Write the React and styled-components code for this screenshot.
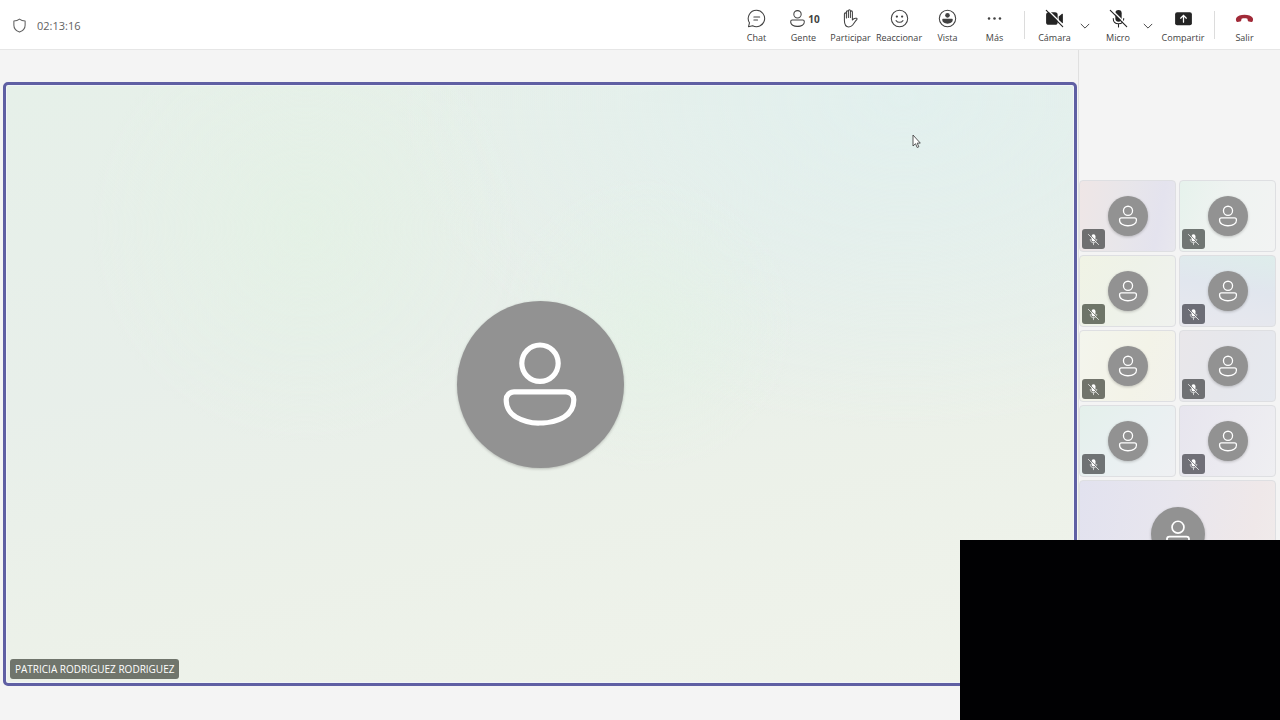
import styled, { createGlobalStyle } from "styled-components";

const GlobalStyle = createGlobalStyle`
  * {
    box-sizing: border-box;
  }

  body {
    margin: 0;
    background-color: #f4f4f4;
    color: #424242;
    font-family: "Open Sans", "Noto Sans", sans-serif;
  }

  button {
    font-family: inherit;
    color: inherit;
  }
`;

const StyledMeeting = styled.div`
  min-height: 100vh;
  display: flex;
  flex-direction: column;
`;

const StyledHeader = styled.header`
  height: 50px;
  padding: 0 12px;
  background-color: #ffffff;
  border-bottom: 1px solid #e6e6e6;
  display: flex;
  align-items: center;
  justify-content: space-between;
`;

const StyledStatus = styled.div`
  padding-top: 2px;
  display: flex;
  align-items: center;
  gap: 10px;
  font-size: 11px;
  color: #616161;
`;

const StyledToolbar = styled.nav`
  display: flex;
  align-items: center;
`;

const StyledToolButton = styled.button`
  width: ${(props) => props.$width || 47}px;
  height: 41px;
  padding: 4px 0 0;
  border: none;
  background: none;
  display: flex;
  flex-direction: column;
  align-items: center;
  gap: 2px;
  font-size: 9px;
  line-height: 14px;
  cursor: pointer;
`;

const StyledToolIcon = styled.span`
  height: 21px;
  display: flex;
  align-items: center;
  color: ${(props) => props.$color || "#424242"};
`;

const StyledCount = styled.span`
  font-size: 10px;
  font-weight: 700;
`;

const StyledChevronButton = styled.button`
  width: 14px;
  height: 40px;
  margin-right: 3px;
  padding: 2px 0 0;
  border: none;
  background: none;
  display: flex;
  align-items: center;
  justify-content: center;
  cursor: pointer;
`;

const StyledDivider = styled.span`
  width: 1px;
  height: 28px;
  margin: 0 6px;
  background-color: #dcdcdc;
`;

const StyledStage = styled.main`
  flex: 1;
  padding-bottom: 2px;
  display: flex;
`;

const StyledSpeakerArea = styled.section`
  flex: 1;
  padding: 0 1px 0 3px;
  display: flex;
  align-items: center;
`;

const StyledSpeaker = styled.article`
  width: 100%;
  aspect-ratio: 16 / 9;
  border: 3px solid #5f5fa3;
  border-radius: 5px;
  padding: 4px;
  display: grid;
  box-shadow: inset 0 0 0 1px #f1f5f8;
  background:
    radial-gradient(circle at 28% 24%, #e3f2e4b0 0%, #e3f2e400 24%),
    radial-gradient(circle at 60% 40%, #e3f2e5b0 0%, #e3f2e500 20%),
    radial-gradient(ellipse at 84% 2%, #e2f0ee 0%, #e2f0ee00 40%),
    linear-gradient(168deg, #e6f0e9 0%, #e8efea 40%, #ecf1e9 68%, #f0f3eb 100%);
`;

const StyledAvatar = styled.span`
  width: ${(props) => props.$size}px;
  height: ${(props) => props.$size}px;
  grid-area: 1 / 1;
  place-self: center;
  border-radius: 50%;
  background-color: #929292;
  color: #ffffff;
  box-shadow: 0 1px 3px #00000038;
  display: flex;
  align-items: center;
  justify-content: center;
`;

const StyledName = styled.span`
  grid-area: 1 / 1;
  place-self: end start;
  height: 20px;
  padding: 0 5px;
  border-radius: 3px;
  background-color: #70756c;
  color: #ffffff;
  font-size: 10px;
  line-height: 20px;
`;

const StyledGallery = styled.aside`
  border-left: 1px solid #e0e0e0;
  padding-right: 4px;
  display: grid;
  grid-template-columns: 97px 97px;
  gap: 3px;
  align-content: center;
`;

const StyledTile = styled.article`
  height: ${(props) => (props.$wide ? 108 : 72)}px;
  grid-column: ${(props) => (props.$wide ? "span 2" : "auto")};
  padding: 2px;
  border: 1px solid #dedfe2;
  border-radius: 4px;
  background: ${(props) => props.$background};
  display: grid;
`;

const StyledMuted = styled.span`
  grid-area: 1 / 1;
  place-self: end start;
  width: 23px;
  height: 20px;
  border-radius: 3px;
  background-color: ${(props) => props.$color};
  color: #ffffff;
  display: flex;
  align-items: center;
  justify-content: center;
`;

const StyledOverlay = styled.div`
  position: fixed;
  right: 0;
  bottom: 0;
  width: 25%;
  height: 25%;
  background-color: #010103;
`;

const StyledCursor = styled.svg`
  position: fixed;
  left: 912px;
  top: 134px;
`;

const Icon = ({ size = 21, children }) => (
  <svg width={size} height={size} viewBox="0 0 20 20" fill="currentColor" aria-hidden="true">
    {children}
  </svg>
);

const Outline = ({ width = 1, ...props }) => (
  <path fill="none" stroke="currentColor" strokeWidth={width} strokeLinecap="round" strokeLinejoin="round" {...props} />
);

const PersonIcon = ({ size }) => (
  <Icon size={size}>
    <path d="M10 2a4 4 0 1 0 0 8 4 4 0 0 0 0-8ZM7 6a3 3 0 1 1 6 0 3 3 0 0 1-6 0Zm-2 5a2 2 0 0 0-2 2c0 1.7.83 2.97 2.13 3.8A9.14 9.14 0 0 0 10 18c1.85 0 3.58-.39 4.87-1.2A4.35 4.35 0 0 0 17 13a2 2 0 0 0-2-2H5Zm-1 2a1 1 0 0 1 1-1h10a1 1 0 0 1 1 1c0 1.3-.62 2.28-1.67 2.95A8.16 8.16 0 0 1 10 17a8.16 8.16 0 0 1-4.33-1.05A3.36 3.36 0 0 1 4 13Z" />
  </Icon>
);

const ShieldIcon = () => (
  <Icon size={15}>
    <Outline width={1.4} d="M10 1.5C12.2 3.3 14.7 4 17.5 4v5.5c0 4.3-2.6 7.3-7.5 9.3-4.9-2-7.5-5-7.5-9.3V4C5.3 4 7.8 3.3 10 1.5Z" />
  </Icon>
);

const ChatIcon = () => (
  <Icon>
    <Outline d="M10 2.2a7.800 7.800 0 1 1-3.700 14.700l-3.900.9.9-3.700A7.800 7.800 0 0 1 10 2.200Z" />
    <Outline d="M7.500 8.500h5.500M7.500 11.500h3.500" />
  </Icon>
);

const HandIcon = () => (
  <Icon>
    <Outline
      d="M4.200 12V5.600c0-1.300 1.900-1.300 1.900 0V9.500M6.100 9V3.600c0-1.300 1.900-1.300 1.900 0V9M8 8.500V2.700c0-1.300 1.900-1.300 1.900 0V9M9.900 9V3.700c0-1.300 1.900-1.300 1.900 0v7.800c1-1.500 2.400-2.100 4-1.700.6.200.6.800.2 1.200-1.700 1.700-2.600 3.700-3.900 5.200C11 17.500 9.900 18 8.300 18c-2.900 0-4.100-2.200-4.100-6"
    />
  </Icon>
);

const SmileIcon = () => (
  <Icon>
    <Outline d="M10 2.200a7.800 7.800 0 1 1 0 15.600 7.800 7.800 0 0 1 0-15.600ZM6.700 12c1.700 2.200 4.900 2.200 6.600 0" />
    <circle cx="7.500" cy="8.200" r="1.100" />
    <circle cx="12.500" cy="8.200" r="1.100" />
  </Icon>
);

const ViewIcon = () => (
  <Icon>
    <Outline d="M10 2.200a7.800 7.800 0 1 1 0 15.600 7.800 7.800 0 0 1 0-15.600Z" />
    <circle cx="10" cy="7" r="2.200" />
    <path d="M6 10.300h8c.6 0 1 .4 1 1 0 2.300-2.200 3.700-5 3.700s-5-1.400-5-3.700c0-.6.4-1 1-1Z" />
  </Icon>
);

const MoreIcon = () => (
  <Icon>
    <circle cx="4.800" cy="10" r="1.200" />
    <circle cx="10" cy="10" r="1.200" />
    <circle cx="15.200" cy="10" r="1.200" />
  </Icon>
);

const CameraOffIcon = () => (
  <Icon>
    <rect x="2" y="4" width="11" height="12" rx="2.500" />
    <path d="M14 8l3.200-2.500c.4-.3.800 0 .8.4v8.200c0 .4-.4.7-.8.4L14 12V8Z" />
    <path d="M3.200 1.500 18.800 17" stroke="#ffffff" strokeWidth="1.400" />
    <Outline width={1.1} d="M2.200 2.200 17.800 17.800" />
  </Icon>
);

const MicOffIcon = ({ size, cut }) => (
  <Icon size={size}>
    <rect x="7" y="2" width="6" height="11" rx="3" />
    <Outline d="M5 10c0 3 2 5 5 5s5-2 5-5M10 15v3" />
    <path d="M3.200 1.500 18.800 17" stroke={cut} strokeWidth="1.400" />
    <Outline width={1.1} d="M2.200 2.200 17.800 17.800" />
  </Icon>
);

const ShareIcon = () => (
  <Icon>
    <rect x="2" y="4" width="16" height="12.500" rx="2" />
    <path d="M10 13.500V7.200M7.300 9.700 10 7l2.700 2.700" fill="none" stroke="#ffffff" strokeWidth="1.200" strokeLinecap="round" />
  </Icon>
);

const HangUpIcon = () => (
  <Icon>
    <path d="M10 6.500c3.700 0 6.500 1 7.700 2.900.6 1 .5 2 .2 3-.2.700-.8 1-1.500.9l-2.200-.4c-.6-.1-1-.5-1.100-1.100l-.3-1.600c-1.800-.5-3.800-.5-5.600 0l-.3 1.600c-.1.600-.5 1-1.100 1.100l-2.200.4c-.7.100-1.300-.2-1.500-.9-.3-1-.4-2 .2-3C3.500 7.500 6.300 6.500 10 6.500Z" />
  </Icon>
);

const ChevronIcon = () => (
  <Icon size={12}>
    <Outline width={1.6} d="M3.500 7 10 13.500 16.500 7" />
  </Icon>
);

const ToolButton = ({ label, icon, width, color, count }) => (
  <StyledToolButton type="button" $width={width}>
    <StyledToolIcon $color={color}>
      {icon}
      {count && <StyledCount>{count}</StyledCount>}
    </StyledToolIcon>
    {label}
  </StyledToolButton>
);

const ChevronButton = ({ label }) => (
  <StyledChevronButton type="button" aria-label={label}>
    <ChevronIcon />
  </StyledChevronButton>
);

const participants = [
  { background: "linear-gradient(100deg, #efe6e6 0%, #e8e6ea 45%, #e4e3ee 80%, #e8e7ee 100%)", badge: "#6f6f70" },
  { background: "linear-gradient(110deg, #e6f2ec 0%, #eff3f1 45%, #f2f3f3 100%)", badge: "#707673" },
  { background: "linear-gradient(120deg, #f0f3e5 0%, #eef2e9 50%, #f0f2ef 100%)", badge: "#6e7568" },
  { background: "linear-gradient(190deg, #deedeb 0%, #e1e6ee 45%, #e8e8ee 100%)", badge: "#6c6d76" },
  { background: "linear-gradient(110deg, #f3f5ed 0%, #f3f3e8 60%, #f2f2ec 100%)", badge: "#71746b" },
  { background: "linear-gradient(110deg, #e9e7ea 0%, #e6e7ec 50%, #e6e9ef 100%)", badge: "#6f7073" },
  { background: "linear-gradient(130deg, #e4f0eb 0%, #e9f0f1 50%, #eff0f3 100%)", badge: "#6f7374" },
  { background: "linear-gradient(110deg, #e7e5ee 0%, #ebeaf0 50%, #efeff2 100%)", badge: "#706f77" },
];

const App = () => {
  return (
    <StyledMeeting>
      <GlobalStyle />
      <StyledHeader>
        <StyledStatus>
          <ShieldIcon />
          <span>02:13:16</span>
        </StyledStatus>
        <StyledToolbar>
          <ToolButton label="Chat" icon={<ChatIcon />} />
          <ToolButton label="Gente" icon={<PersonIcon size={21} />} count={10} />
          <ToolButton label="Participar" icon={<HandIcon />} />
          <ToolButton label="Reaccionar" icon={<SmileIcon />} width={50} />
          <ToolButton label="Vista" icon={<ViewIcon />} />
          <ToolButton label="Más" icon={<MoreIcon />} />
          <StyledDivider />
          <ToolButton label="Cámara" icon={<CameraOffIcon />} color="#242424" />
          <ChevronButton label="Opciones de cámara" />
          <ToolButton label="Micro" icon={<MicOffIcon size={21} cut="#ffffff" />} width={46} color="#242424" />
          <ChevronButton label="Opciones de micro" />
          <ToolButton label="Compartir" icon={<ShareIcon />} width={50} color="#242424" />
          <StyledDivider />
          <ToolButton label="Salir" icon={<HangUpIcon />} color="#a12a38" />
        </StyledToolbar>
      </StyledHeader>
      <StyledStage>
        <StyledSpeakerArea>
          <StyledSpeaker>
            <StyledAvatar $size={167}>
              <PersonIcon size={104} />
            </StyledAvatar>
            <StyledName>PATRICIA RODRIGUEZ RODRIGUEZ</StyledName>
          </StyledSpeaker>
        </StyledSpeakerArea>
        <StyledGallery>
          {participants.map(({ background, badge }, index) => (
            <StyledTile key={index} $background={background}>
              <StyledAvatar $size={40}>
                <PersonIcon size={26} />
              </StyledAvatar>
              <StyledMuted $color={badge}>
                <MicOffIcon size={13} cut={badge} />
              </StyledMuted>
            </StyledTile>
          ))}
          <StyledTile $wide $background="linear-gradient(100deg, #e2e2ef 0%, #e8e6ee 45%, #efe8e9 85%, #f0ebeb 100%)">
            <StyledAvatar $size={54}>
              <PersonIcon size={34} />
            </StyledAvatar>
          </StyledTile>
        </StyledGallery>
      </StyledStage>
      <StyledCursor width="9" height="15" viewBox="0 0 9 15" aria-hidden="true">
        <path d="M1 1v11l2.500-2.300 1.700 3.800 1.600-.7-1.600-3.700H8.300Z" fill="#ffffff" stroke="#444444" strokeWidth="0.9" />
      </StyledCursor>
      <StyledOverlay />
    </StyledMeeting>
  );
};

export default App;
